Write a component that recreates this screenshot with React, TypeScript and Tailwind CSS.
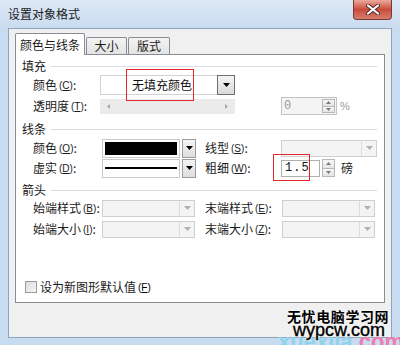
import React from "react";

const CJK = '"Noto Sans CJK SC", "Noto Sans", sans-serif';

function Tri({ color = "#000" }: { color?: string }) {
  return (
    <svg width="7" height="4" viewBox="0 0 7 4">
      <path d="M0 0 H7 L3.5 4 Z" fill={color} />
    </svg>
  );
}

function SpinArrows() {
  return (
    <div className="flex h-full w-[13px] flex-col">
      <div className="flex flex-1 items-center justify-center border border-[#b8b8b8] bg-linear-to-b from-[#f7f7f7] to-[#e4e4e4]">
        <svg width="5" height="3" viewBox="0 0 5 3">
          <path d="M0 3 H5 L2.5 0 Z" fill="#7a7a7a" />
        </svg>
      </div>
      <div className="-mt-px flex flex-1 items-center justify-center border border-[#b8b8b8] bg-linear-to-b from-[#f7f7f7] to-[#e4e4e4]">
        <svg width="5" height="3" viewBox="0 0 5 3">
          <path d="M0 0 H5 L2.5 3 Z" fill="#7a7a7a" />
        </svg>
      </div>
    </div>
  );
}

function Label({ text, k, w }: { text: string; k: string; w: string }) {
  return (
    <div className={`${w} flex shrink-0 items-center whitespace-nowrap text-[12px] text-[#1a1a1a]`}>
      <span>{text}</span>
      <span className="ml-[2px] text-[10px]" style={{ fontFamily: '"Liberation Sans", sans-serif' }}>
        (<span className="underline">{k}</span>)
      </span>
      <span>:</span>
    </div>
  );
}

function DisabledCombo({ w }: { w: string }) {
  return (
    <div className={`${w} flex h-[17px] shrink-0 border border-[#cfcfcf] bg-[#f4f4f4]`}>
      <div className="flex-1" />
      <div className="flex w-[15px] items-center justify-center border-l border-[#dcdcdc]">
        <Tri color="#b0b0b0" />
      </div>
    </div>
  );
}

function Heading({ text }: { text: string }) {
  return (
    <div className="flex h-[16px] items-center pl-[6px] pr-[7px]">
      <span className="text-[12px] text-[#1a1a1a]">{text}</span>
      <div className="ml-[5px] h-px flex-1 bg-[#d5dbe1]" />
    </div>
  );
}

export default function App() {
  return (
    <div
      className="relative flex h-[345px] w-[400px] flex-col overflow-hidden bg-[#c7dbf1]"
      style={{ fontFamily: CJK }}
    >
      {/* title bar */}
      <div className="relative flex h-[28px] shrink-0 items-center bg-linear-to-b from-[#dce8f5] to-[#cadcf0] pl-[8px]">
        <span className="text-[12px] text-[#1b1b1b]">设置对象格式</span>
        <div className="absolute right-[8px] top-0 flex h-[20px] w-[39px] items-center justify-center rounded-b-[4px] border border-t-0 border-[#7a3b34] bg-linear-to-b from-[#e9a99c] via-[#c94a3c] to-[#d77e6d]">
          <svg width="14" height="11" viewBox="0 0 14 11">
            <path d="M2 1.5 L12 9.5 M12 1.5 L2 9.5" stroke="#4a2a26" strokeWidth="4" strokeLinecap="round" />
            <path d="M2 1.5 L12 9.5 M12 1.5 L2 9.5" stroke="#ffffff" strokeWidth="2.2" strokeLinecap="round" />
          </svg>
        </div>
      </div>

      {/* middle */}
      <div className="mx-[8px] flex flex-1 flex-col border border-[#8ea2bb] bg-[#f0f0f0] pl-[6px] pr-[6px] pt-[4px]">
        {/* tabs */}
        <div className="relative z-10 flex h-[21px] items-end">
          <div className="-mb-px flex h-[22px] w-[70px] items-center justify-center rounded-t-[2px] border border-b-0 border-[#898c95] bg-white text-[12px] text-[#1a1a1a]">
            颜色与线条
          </div>
          <div className="ml-px flex h-[17px] w-[41px] items-center justify-center rounded-t-[2px] border border-b-0 border-[#898c95] bg-linear-to-b from-[#f3f3f3] to-[#e3e3e3] text-[12px] text-[#1a1a1a]">
            大小
          </div>
          <div className="ml-px flex h-[17px] w-[42px] items-center justify-center rounded-t-[2px] border border-b-0 border-[#898c95] bg-linear-to-b from-[#f3f3f3] to-[#e3e3e3] text-[12px] text-[#1a1a1a]">
            版式
          </div>
        </div>

        {/* panel */}
        <div className="flex h-[249px] flex-col border border-[#898c95] bg-white pt-[3px]">
          <Heading text="填充" />
          {/* row 1 */}
          <div className="mt-px flex h-[20px] items-center pl-[17px]">
            <Label text="颜色" k="C" w="w-[67px]" />
            <div className="relative flex h-[20px] w-[135px] border border-[#d2d2d2] bg-white">
              <div className="flex flex-1 items-center pl-[31px] text-[12px] text-[#111]">无填充颜色</div>
              <div className="-my-px -mr-px flex w-[18px] items-center justify-center border border-[#6f6f6f] bg-linear-to-b from-[#f4f4f4] to-[#dadada]">
                <Tri />
              </div>
              <div className="absolute -top-[7px] left-[25px] h-[32px] w-[68px] border border-[#e3262b]" />
            </div>
          </div>
          {/* row 2 */}
          <div className="mt-px flex h-[20px] items-center pl-[17px]">
            <Label text="透明度" k="T" w="w-[67px]" />
            <div className="flex h-[15px] w-[135px] items-center justify-between bg-[#ebebeb] px-[7px]">
              <svg width="3" height="5" viewBox="0 0 3 5">
                <path d="M3 0 V5 L0 2.5 Z" fill="#a8a8a8" />
              </svg>
              <svg width="3" height="5" viewBox="0 0 3 5">
                <path d="M0 0 V5 L3 2.5 Z" fill="#a8a8a8" />
              </svg>
            </div>
            <div className="ml-[46px] flex h-[18px] w-[56px] border border-[#c3c3c3] bg-[#f4f4f4]">
              <div className="flex flex-1 items-center pl-[2px] text-[12px] text-[#9a9a9a]" style={{ fontFamily: '"Liberation Mono", monospace' }}>
                0
              </div>
              <div className="py-px pr-px">
                <SpinArrows />
              </div>
            </div>
            <span className="ml-[3px] text-[11px] text-[#9a9a9a]" style={{ fontFamily: '"Liberation Sans", sans-serif' }}>
              %
            </span>
          </div>

          <div className="mt-[5px]">
            <Heading text="线条" />
          </div>
          {/* row 3 */}
          <div className="mt-[1px] flex h-[20px] items-center pl-[17px]">
            <Label text="颜色" k="O" w="w-[69px]" />
            <div className="flex h-[19px] w-[94px] shrink-0">
              <div className="flex w-[79px] items-center border border-[#c8c8c8] bg-white p-[2px]">
                <div className="h-full w-full bg-black" />
              </div>
              <div className="ml-[2px] flex w-[14px] items-center justify-center border border-[#9c9c9c] bg-linear-to-b from-[#f4f4f4] to-[#dedede]">
                <Tri />
              </div>
            </div>
            <Label text="线型" k="S" w="ml-[9px] w-[76px]" />
            <DisabledCombo w="w-[96px]" />
          </div>
          {/* row 4 */}
          <div className="flex h-[20px] items-center pl-[17px]">
            <Label text="虚实" k="D" w="w-[69px]" />
            <div className="flex h-[19px] w-[94px] shrink-0">
              <div className="flex w-[79px] items-center border border-[#c8c8c8] bg-white px-[2px]">
                <div className="h-[2px] w-full bg-black" />
              </div>
              <div className="ml-[2px] flex w-[14px] items-center justify-center border border-[#9c9c9c] bg-linear-to-b from-[#f4f4f4] to-[#dedede]">
                <Tri />
              </div>
            </div>
            <Label text="粗细" k="W" w="ml-[9px] w-[76px]" />
            <div className="relative flex h-[17px] w-[39px] items-center border border-[#b0b0b0] bg-white pl-[3px] text-[12px] tracking-[1px] text-[#111]" style={{ fontFamily: '"Liberation Mono", monospace' }}>
              1.5
              <div className="absolute -left-[9px] -top-[7px] h-[27px] w-[37px] border border-[#e3262b]" />
            </div>
            <div className="ml-[2px] h-[18px]">
              <SpinArrows />
            </div>
            <span className="ml-[6px] text-[12px] text-[#1a1a1a]">磅</span>
          </div>

          <div className="mt-[4px]">
            <Heading text="箭头" />
          </div>
          {/* row 5 */}
          <div className="flex h-[20px] items-center pl-[17px]">
            <Label text="始端样式" k="B" w="w-[69px]" />
            <DisabledCombo w="w-[93px]" />
            <Label text="末端样式" k="E" w="ml-[10px] w-[77px]" />
            <DisabledCombo w="w-[93px]" />
          </div>
          {/* row 6 */}
          <div className="mt-[1px] flex h-[20px] items-center pl-[17px]">
            <Label text="始端大小" k="I" w="w-[69px]" />
            <DisabledCombo w="w-[93px]" />
            <Label text="末端大小" k="Z" w="ml-[10px] w-[77px]" />
            <DisabledCombo w="w-[93px]" />
          </div>

          <div className="mt-auto mb-[8px] flex h-[14px] items-center pl-[9px]">
            <div className="h-[12px] w-[12px] border border-[#9a9a9a] bg-linear-to-br from-[#dcdcdc] to-[#f6f6f6]" />
            <span className="ml-[3px] text-[12px] text-[#1a1a1a]">设为新图形默认值</span>
            <span className="ml-[2px] text-[10px]" style={{ fontFamily: '"Liberation Sans", sans-serif' }}>
              (<span className="underline">F</span>)
            </span>
          </div>
        </div>
        <div className="flex-1" />
      </div>
      <div className="h-[7px] shrink-0" />

      {/* watermark overlay */}
      <div
        className="absolute left-[278px] top-[331px] text-[22px] font-bold leading-[22px] text-[#8fd3ec]"
        style={{ fontFamily: '"Liberation Sans", sans-serif' }}
      >
        xuexila.<span className="text-[#f07bb0]">com</span>
      </div>
      <div
        className="absolute left-[287px] top-[307px] text-[14px] font-bold leading-[18px] tracking-[0.6px] text-black [text-shadow:0_0_2px_#fff,0_0_2px_#fff]"
      >
        无忧电脑学习网
      </div>
      <div
        className="absolute left-[293px] top-[320px] text-[18px] leading-[20px] text-black [-webkit-text-stroke:0.4px_black] [text-shadow:0_0_2px_#fff,0_0_2px_#fff,0_0_2px_#fff]"
        style={{ fontFamily: '"Liberation Sans", sans-serif' }}
      >
        wypcw.com
      </div>
    </div>
  );
}
